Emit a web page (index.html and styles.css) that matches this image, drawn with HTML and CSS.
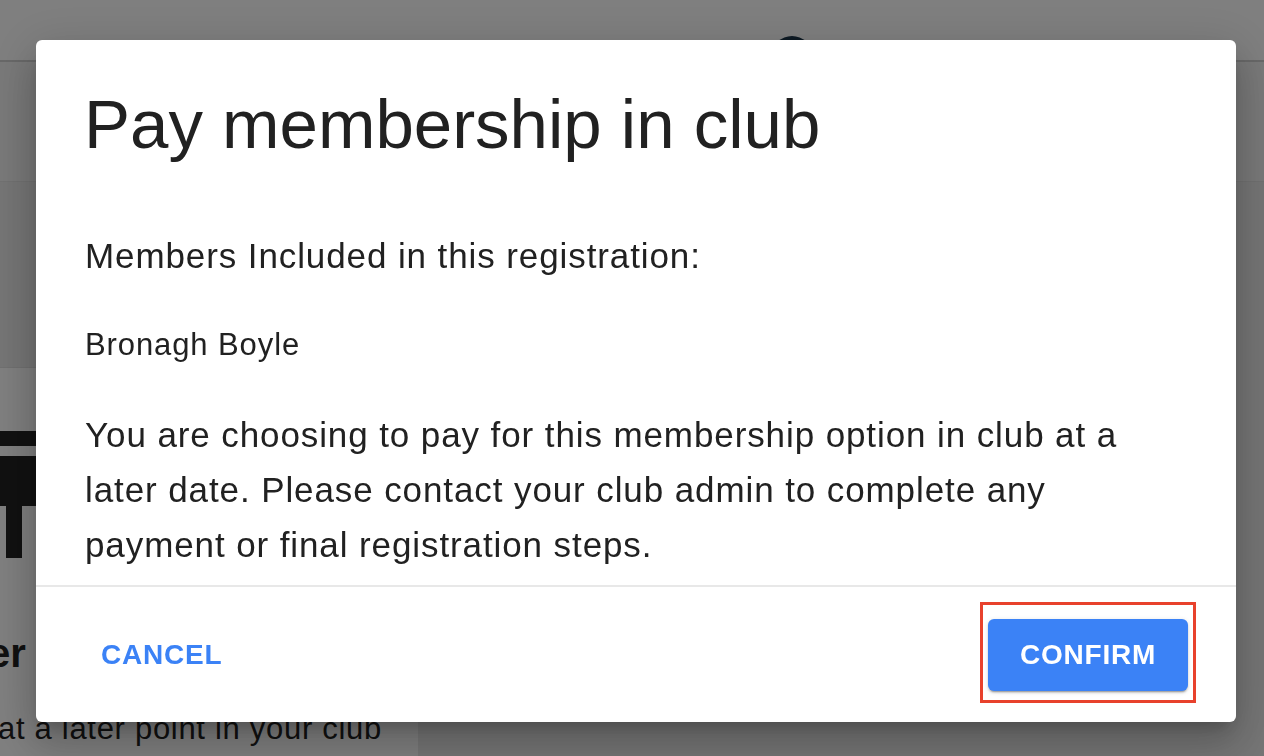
FILE: index.html
```html
<!DOCTYPE html>
<html lang="en">

<head>
  <meta charset="UTF-8" />
  <meta name="viewport" content="width=device-width, initial-scale=1" />
  <title>Pay membership in club</title>
  <link rel="stylesheet" href="styles.css">
</head>

<body>
  <!-- Page behind the dialog -->
  <div class="page">
    <header class="topbar">
      <span class="avatar"></span>
    </header>
    <div class="subbar"></div>

    <main class="content">
      <section class="card">
        <svg class="logo" width="60" height="127" viewBox="0 0 60 127">
          <rect x="0" y="0" width="60" height="15" fill="#222" />
          <rect x="0" y="25" width="60" height="50" fill="#222" />
          <rect x="6" y="75" width="16" height="52" fill="#222" />
        </svg>
        <h3 class="card-title">er</h3>
        <p class="card-text">at a later point in your club</p>
      </section>
    </main>
  </div>

  <!-- Dialog -->
  <div class="backdrop">
    <div class="dialog" role="dialog">
      <h2 class="dialog-title">Pay membership in club</h2>

      <div class="dialog-body">
        <p class="lead">Members Included in this registration:</p>
        <p class="member">Bronagh Boyle</p>
        <p class="note">You are choosing to pay for this membership option in club at a later date. Please contact your club admin to complete any payment or final registration steps.</p>
      </div>

      <div class="dialog-actions">
        <button class="btn-text">Cancel</button>
        <span class="highlight">
          <button class="btn-primary">Confirm</button>
        </span>
      </div>
    </div>
  </div>
</body>

</html>
```

FILE: styles.css
```css
body {
  margin: 0;
  font-family: 'Liberation Sans', Helvetica, Arial, sans-serif;
  color: #212121;
  background: #ebebeb;
  overflow: hidden;
}

.page {
  height: 756px;
  overflow: hidden;
}

.topbar {
  height: 62px;
  box-sizing: border-box;
  background: #fff;
  border-bottom: 2px solid #d0d0d0;
  padding: 36px 0 0 772px;
}

.avatar {
  display: block;
  width: 40px;
  height: 40px;
  border-radius: 50%;
  background: #1b3448;
}

.subbar {
  height: 119px;
  background: #f2f2f2;
  border-bottom: 1px solid #e2e2e2;
}

.content {
  padding-top: 185px;
}

.card {
  width: 418px;
  background: #fff;
  border-top: 1px solid #e0e0e0;
  padding-top: 63px;
  height: 326px;
}

.logo {
  display: block;
}

.card-title {
  margin: 71px 0 0 -12px;
  font-size: 40px;
  line-height: 48px;
  font-weight: 700;
}

.card-text {
  margin: 32px 0 0 -2px;
  font-size: 31px;
  line-height: 40px;
  letter-spacing: 0.7px;
}

/* dialog */

.backdrop {
  position: fixed;
  inset: 0;
  background: rgba(0, 0, 0, 0.5);
  padding: 40px 0 0 36px;
}

.dialog {
  width: 1200px;
  height: 682px;
  background: #fff;
  border-radius: 6px;
  display: flex;
  flex-direction: column;
  overflow: hidden;
  box-shadow: 0 11px 15px -7px rgba(0, 0, 0, 0.2), 0 24px 38px 3px rgba(0, 0, 0, 0.14), 0 9px 46px 8px rgba(0, 0, 0, 0.12);
}

.dialog-title {
  margin: 0;
  padding: 45px 48px 0;
  font-size: 69px;
  line-height: 80px;
  font-weight: 400;
}

.dialog-body {
  flex: 1;
  overflow: hidden;
  padding: 64px 48px 0 49px;
}

.dialog-body p {
  margin: 0 0 35px;
  line-height: 54px;
  letter-spacing: 0.9px;
}

.lead,
.note {
  font-size: 35px;
}

.dialog-body .note {
  line-height: 55px;
}

.member {
  font-size: 31px;
}

.dialog-actions {
  height: 137px;
  box-sizing: border-box;
  border-top: 2px solid #e8e8e8;
  padding: 0 40px 0 49px;
  display: flex;
  align-items: center;
  justify-content: space-between;
}

button {
  font-family: inherit;
  font-size: 28px;
  font-weight: 700;
  letter-spacing: 0.8px;
  text-transform: uppercase;
  border: none;
  cursor: pointer;
}

.btn-text {
  background: none;
  color: #3b82f6;
  padding: 0 16px;
}

.highlight {
  display: block;
  border: 3px solid #e8412c;
  padding: 14px 5px 9px;
  margin-bottom: 4px;
}

.btn-primary {
  display: block;
  width: 200px;
  height: 72px;
  border-radius: 6px;
  background: #3b82f6;
  color: #fff;
  box-shadow: 0 3px 1px -2px rgba(0, 0, 0, 0.2), 0 2px 2px 0 rgba(0, 0, 0, 0.14), 0 1px 5px 0 rgba(0, 0, 0, 0.12);
}
```
